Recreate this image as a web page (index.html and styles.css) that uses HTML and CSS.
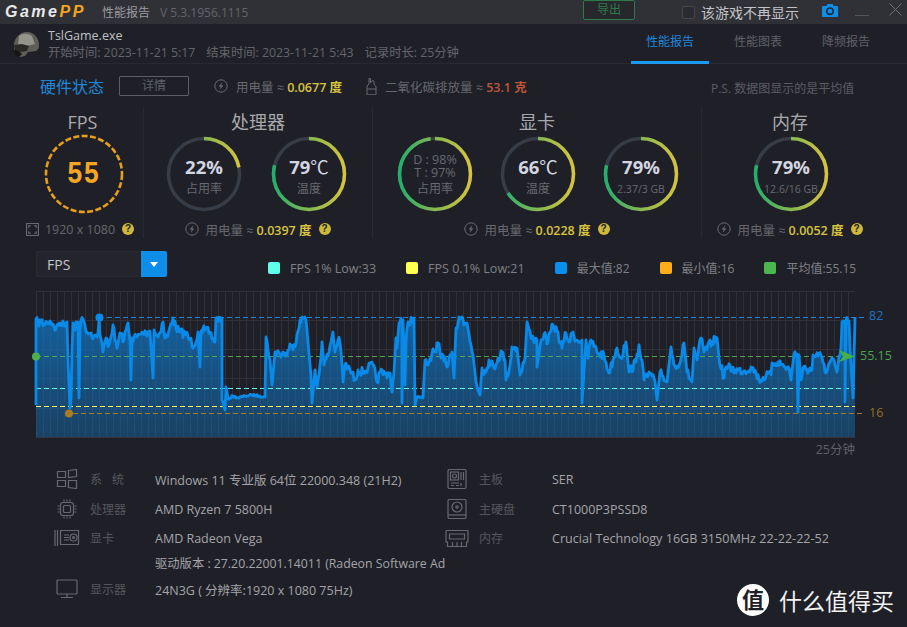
FILE: index.html
```html
<!DOCTYPE html>
<html lang="zh-CN">
<head>
  <meta charset="UTF-8" />
  <title>GamePP 性能报告</title>
  <link rel="stylesheet" href="styles.css">
</head>
<body>

<!-- iconos repetidos -->
<svg class="defs" width="0" height="0">
  <defs>
    <linearGradient id="ringGrad" x1="0" y1="0" x2="0" y2="1">
      <stop offset="0" stop-color="#22b06c"/>
      <stop offset="0.5" stop-color="#86b94f"/>
      <stop offset="1" stop-color="#d6c33c"/>
    </linearGradient>
    <linearGradient id="areaGrad" x1="0" y1="0" x2="0" y2="1">
      <stop offset="0" stop-color="#0f7acc" stop-opacity="0.72"/>
      <stop offset="1" stop-color="#1466a8" stop-opacity="0.48"/>
    </linearGradient>
    <pattern id="gridV" x="36" y="0" width="7" height="10" patternUnits="userSpaceOnUse">
      <line x1="0.5" y1="0" x2="0.5" y2="10" stroke="#2f3037"/>
    </pattern>
    <symbol id="bolt" viewBox="0 0 14 14">
      <circle cx="7" cy="7" r="6.2" fill="none" stroke="#6a6b72" stroke-width="1"/>
      <path d="M8.4 3.2 4.6 7.6h2.2l-1.2 3.2 3.8-4.4H7.2z" fill="#6a6b72"/>
    </symbol>
  </defs>
</svg>

<header class="titlebar">
  <span class="logo">Game<b>PP</b></span>
  <span class="title">性能报告</span>
  <span class="version">V 5.3.1956.1115</span>
  <span class="export">导出</span>
  <span class="checkbox"></span>
  <span class="hide-game">该游戏不再显示</span>
  <svg class="camera" width="16" height="13" viewBox="0 0 16 13">
    <path d="M1 2h3.4l1-2h5.2l1 2H15a1 1 0 0 1 1 1v9a1 1 0 0 1-1 1H1a1 1 0 0 1-1-1V3a1 1 0 0 1 1-1z" fill="#0e8ee9"/>
    <circle cx="8" cy="7.2" r="3.2" fill="none" stroke="#1f2c3a" stroke-width="1.6"/>
  </svg>
  <span class="minimize"></span>
  <svg class="close" width="13" height="13" viewBox="0 0 13 13">
    <path d="M.5.5l12 12M12.5.5l-12 12" stroke="#6e6f75" stroke-width="1" fill="none"/>
  </svg>
</header>

<section class="subhead">
  <svg class="helmet" width="29" height="27" viewBox="0 0 29 27">
    <path d="M3 17C2 8 8 1 16 1c7 0 12 6 12 13 0 3-1 5-3 6l-8 1-3 4-5 1-5-3z" fill="#5f5e59"/>
    <path d="M8 5c3-3 9-3 13 0l3 8-8 2-9-1z" fill="#94948c"/>
    <path d="M3 14l8-1 7 2-2 5-5 1-7-1z" fill="#2c2a27"/>
    <path d="M2 19l6 1 3 3-3 3-4-2z" fill="#171614"/>
  </svg>
  <div class="game-info">
    <div class="game-name">TslGame.exe</div>
    <div class="game-times">
      <span>开始时间: 2023-11-21 5:17</span>
      <span>结束时间: 2023-11-21 5:43</span>
      <span>记录时长: 25分钟</span>
    </div>
  </div>
  <nav class="tabs">
    <a class="tab active">性能报告</a>
    <a class="tab">性能图表</a>
    <a class="tab">降频报告</a>
  </nav>
</section>

<section class="status">
  <h2 class="status-title">硬件状态</h2>
  <span class="detail-btn">详情</span>
  <svg class="bolt-icon first" width="14" height="14"><use href="#bolt"/></svg>
  <span class="power">用电量 ≈ <b class="yellow">0.0677 度</b></span>
  <svg class="bottle" width="11" height="17" viewBox="0 0 11 17">
    <path d="M3 .5h1.5v4L7 2.500l1 .8v3l2 2.500v8H1V8l2-2z" fill="none" stroke="#6a6b72"/>
    <path d="M1 11h9" stroke="#6a6b72"/>
  </svg>
  <span class="power co2">二氧化碳排放量 ≈ <b class="red">53.1 克</b></span>
  <span class="note">P.S. 数据图显示的是平均值</span>
</section>

<section class="hardware">
  <div class="hw-col hw-fps">
    <h3>FPS</h3>
    <div class="rings">
      <div class="ring">
        <svg width="80" height="80" viewBox="0 0 80 80">
          <circle cx="40" cy="40" r="38" fill="none" stroke="#e89f17" stroke-width="2.6" stroke-dasharray="6 2.4"/>
        </svg>
        <span class="fps-value">55</span>
      </div>
    </div>
    <div class="hw-foot">
      <svg width="13" height="13" viewBox="0 0 12 12">
        <path d="M.5.5h11v11H.5z" fill="none" stroke="#6a6b72"/>
        <path d="M2.500 4.500v-2h2M7.500 2.500h2v2M9.500 7.500v2h-2M4.500 9.500h-2v-2" fill="none" stroke="#6a6b72"/>
      </svg>
      <span>1920 x 1080</span>
      <i class="help">?</i>
    </div>
  </div>

  <div class="hw-col hw-cpu">
    <h3>处理器</h3>
    <div class="rings">
      <div class="ring">
        <svg width="80" height="80" viewBox="0 0 80 80">
          <circle class="track" cx="40" cy="40" r="35.500"/>
          <circle class="arc" cx="40" cy="40" r="35.500" pathLength="100" stroke-dasharray="22 100"/>
        </svg>
        <div class="ring-text"><strong>22%</strong><small>占用率</small></div>
      </div>
      <div class="ring">
        <svg width="80" height="80" viewBox="0 0 80 80">
          <circle class="track" cx="40" cy="40" r="35.500"/>
          <circle class="arc" cx="40" cy="40" r="35.500" pathLength="100" stroke-dasharray="79 100"/>
        </svg>
        <div class="ring-text"><strong>79<em>℃</em></strong><small>温度</small></div>
      </div>
    </div>
    <div class="hw-foot">
      <svg width="14" height="14"><use href="#bolt"/></svg>
      <span>用电量 ≈ <b class="yellow">0.0397 度</b></span>
      <i class="help">?</i>
    </div>
  </div>

  <div class="hw-col">
    <h3>显卡</h3>
    <div class="rings">
      <div class="ring">
        <svg width="80" height="80" viewBox="0 0 80 80">
          <circle class="track" cx="40" cy="40" r="35.500"/>
          <circle class="arc" cx="40" cy="40" r="35.500" pathLength="100" stroke-dasharray="98 100"/>
        </svg>
        <div class="ring-text gpu-use"><p>D : 98%<br>T : 97%</p><small>占用率</small></div>
      </div>
      <div class="ring">
        <svg width="80" height="80" viewBox="0 0 80 80">
          <circle class="track" cx="40" cy="40" r="35.500"/>
          <circle class="arc" cx="40" cy="40" r="35.500" pathLength="100" stroke-dasharray="66 100"/>
        </svg>
        <div class="ring-text"><strong>66<em>℃</em></strong><small>温度</small></div>
      </div>
      <div class="ring">
        <svg width="80" height="80" viewBox="0 0 80 80">
          <circle class="track" cx="40" cy="40" r="35.500"/>
          <circle class="arc" cx="40" cy="40" r="35.500" pathLength="100" stroke-dasharray="79 100"/>
        </svg>
        <div class="ring-text"><strong>79%</strong><small class="mem">2.37/3 GB</small></div>
      </div>
    </div>
    <div class="hw-foot">
      <svg width="14" height="14"><use href="#bolt"/></svg>
      <span>用电量 ≈ <b class="yellow">0.0228 度</b></span>
      <i class="help">?</i>
    </div>
  </div>

  <div class="hw-col last">
    <h3>内存</h3>
    <div class="rings">
      <div class="ring">
        <svg width="80" height="80" viewBox="0 0 80 80">
          <circle class="track" cx="40" cy="40" r="35.500"/>
          <circle class="arc" cx="40" cy="40" r="35.500" pathLength="100" stroke-dasharray="79 100"/>
        </svg>
        <div class="ring-text"><strong>79%</strong><small class="mem">12.6/16 GB</small></div>
      </div>
    </div>
    <div class="hw-foot">
      <svg width="14" height="14"><use href="#bolt"/></svg>
      <span>用电量 ≈ <b class="yellow">0.0052 度</b></span>
      <i class="help">?</i>
    </div>
  </div>
</section>

<section class="chart-head">
  <div class="select">
    <span class="select-value">FPS</span>
    <span class="select-btn"></span>
  </div>
  <ul class="legend">
    <li><i class="sw cyan"></i>FPS 1% Low:33</li>
    <li><i class="sw lemon"></i>FPS 0.1% Low:21</li>
    <li class="cjk"><i class="sw blue"></i>最大值:82</li>
    <li class="cjk"><i class="sw orange"></i>最小值:16</li>
    <li class="cjk"><i class="sw green"></i>平均值:55.15</li>
  </ul>
</section>

<svg class="chart" width="907" height="175" viewBox="0 285 907 175">
  <rect x="36" y="291" width="819" height="146" fill="url(#gridV)"/>
  <path d="M36 291.500H855M36 320.500H855M36 349.500H855M36 378.500H855M36 408.500H855" stroke="#2f3037" fill="none"/>

  <polygon id="fps-area" fill="url(#areaGrad)" points=""/>

  <g fill="none" stroke-dasharray="5 3" stroke-width="1">
    <path d="M107 317.500H865" stroke="#1f86d8"/>
    <path d="M36 356.500H855" stroke="#4fa550"/>
    <path d="M36 388.500H855" stroke="#5dffe9"/>
    <path d="M36 406.500H855" stroke="#fdfd60"/>
    <path d="M73 413.500H865" stroke="#a67c25"/>
  </g>

  <polyline id="fps-line" fill="none" stroke="#0a8ae8" stroke-width="2.8" stroke-linejoin="round" points=""/>

  <path d="M36 437.500H855" stroke="#35363d" fill="none"/>
  <path d="M99.500 320v10" stroke="#0a8ae8" stroke-width="2" fill="none"/>
  <circle cx="99.500" cy="317.500" r="4" fill="#0a8ae8"/>
  <circle cx="36" cy="356.500" r="4" fill="#4cb04f"/>
  <circle cx="69" cy="413.500" r="4" fill="#a67c25"/>
  <polygon points="839,350 855,356.500 839,362 843,356.500" fill="#43b04a"/>

  <text class="axis ax-max" x="869" y="320">82</text>
  <text class="axis ax-avg" x="860" y="360">55.15</text>
  <text class="axis ax-min" x="869" y="417">16</text>
  <text class="axis ax-time" x="855" y="454" text-anchor="end">25分钟</text>
</svg>

<section class="specs">
  <div class="spec-col left">
    <div class="spec">
      <svg class="spec-icon" width="22" height="20" viewBox="0 0 22 20">
        <path d="M1.500 2.500h8v6h-8zM1.500 11.500h8v6h-8zM12.500 1.500l8-1v7l-8 1zM12.500 11.500l8 0v8l-8-1z"/>
      </svg>
      <span class="spec-label wide">系统</span>
      <span class="spec-value">Windows 11 专业版 64位 22000.348 (21H2)</span>
    </div>
    <div class="spec">
      <svg class="spec-icon" width="22" height="20" viewBox="0 0 22 20">
        <rect x="4.500" y="3.500" width="13" height="13" rx="2.500"/>
        <rect x="7.500" y="6.500" width="7" height="7" rx="1"/>
        <path d="M8 .5v2M11 .5v2M14 .5v2M8 17.500v2M11 17.500v2M14 17.500v2M1.500 7h2M1.500 10h2M1.500 13h2M18.500 7h2M18.500 10h2M18.500 13h2"/>
      </svg>
      <span class="spec-label">处理器</span>
      <span class="spec-value">AMD Ryzen 7 5800H</span>
    </div>
    <div class="spec short">
      <svg class="spec-icon gpu" width="26" height="18" viewBox="0 0 26 18">
        <path d="M1 1v16M3.500 1v16M6.500 1.500h18v14h-18z"/>
        <path d="M10 6h5M10 8.500h5M10 11h5"/>
        <circle cx="19.500" cy="8.500" r="3.500"/>
        <circle cx="19.500" cy="8.500" r="1"/>
      </svg>
      <span class="spec-label">显卡</span>
      <span class="spec-value">AMD Radeon Vega</span>
    </div>
    <div class="spec driver">
      <span class="spec-value">驱动版本 : 27.20.22001.14011 (Radeon Software Ad</span>
    </div>
    <div class="spec">
      <svg class="spec-icon" width="22" height="20" viewBox="0 0 22 20">
        <rect x="1" y="1" width="20" height="14" rx="1"/>
        <path d="M11 15v3M5 18.500h12"/>
      </svg>
      <span class="spec-label">显示器</span>
      <span class="spec-value">24N3G ( 分辨率:1920 x 1080 75Hz)</span>
    </div>
  </div>

  <div class="spec-col right">
    <div class="spec">
      <svg class="spec-icon" width="20" height="20" viewBox="0 0 20 20">
        <rect x="1" y="0.500" width="18" height="19" rx="1.500"/>
        <rect x="3.500" y="3" width="8" height="8"/>
        <circle cx="7.500" cy="7" r="2"/>
        <path d="M14 3v8M16.500 3v8M4 14h8M4 16.500h3M9 16.500h3M14 14v3"/>
      </svg>
      <span class="spec-label">主板</span>
      <span class="spec-value">SER</span>
    </div>
    <div class="spec">
      <svg class="spec-icon" width="20" height="20" viewBox="0 0 20 20">
        <rect x="1" y="0.500" width="18" height="19" rx="1.500"/>
        <circle cx="10" cy="8" r="5"/>
        <circle cx="10" cy="8" r="1.200"/>
        <path d="M1 16h18"/>
      </svg>
      <span class="spec-label">主硬盘</span>
      <span class="spec-value">CT1000P3PSSD8</span>
    </div>
    <div class="spec short">
      <svg class="spec-icon ram" width="24" height="17" viewBox="0 0 24 17">
        <path d="M2 .5h20a1 1 0 0 1 1 1v10.500h-1.500v4.500H2.500V12H1V1.500a1 1 0 0 1 1-1z"/>
        <path d="M4.500 4h15v5h-15zM7.500 16v-4M12 16v-4M16.500 16v-4"/>
      </svg>
      <span class="spec-label">内存</span>
      <span class="spec-value crucial">Crucial Technology 16GB 3150MHz 22-22-22-52</span>
    </div>
  </div>
</section>

<div class="watermark">
  <span class="wm-badge">值</span>
  <span class="wm-text">什么值得买</span>
</div>

<script src="chart.js"></script>
</body>
</html>
```

FILE: styles.css
```css
* {
  box-sizing: border-box;
}

body {
  margin: 0;
  width: 907px;
  height: 627px;
  overflow: hidden;
  position: relative;
  background: #1f2027;
  color: #a8a8ad;
  font-family: "Open Sans", "Noto Sans CJK SC", sans-serif;
  font-size: 12.5px;
}

.defs {
  display: block;
  height: 0;
}

/* Barra de titulo */
.titlebar {
  height: 24px;
  background: #303137;
  display: flex;
  align-items: center;
  position: relative;
}

.logo {
  margin-left: 5px;
  width: 97px;
  font: italic bold 16px "Liberation Sans", sans-serif;
  letter-spacing: 2.5px;
  color: #e8e8e8;
}

.logo b {
  color: #f3a51e;
}

.title {
  color: #9a9aa0;
  width: 58px;
  font-size: 12px;
}

.version {
  color: #63646b;
  width: 423px;
  font-size: 12px;
}

.export {
  width: 52px;
  height: 20px;
  margin-top: -4px;
  border: 1px solid #2f7a4c;
  border-radius: 2px;
  background: #26282c;
  color: #2f7a4c;
  font-size: 12px;
  text-align: center;
  line-height: 17px;
}

.checkbox {
  width: 13px;
  height: 13px;
  margin-left: 47px;
  border: 1px solid #45464c;
  border-radius: 2px;
  background: #2a2b30;
}

.hide-game {
  margin-left: 6px;
  width: 121px;
  font-size: 14px;
  color: #c4c4c8;
  white-space: nowrap;
}

.camera {
  margin-top: -4px;
}

.minimize {
  width: 14px;
  height: 1px;
  margin: 6px 0 0 17px;
  background: #55565c;
}

.close {
  margin-left: 20px;
  margin-top: -6px;
}

/* Cabecera del juego */
.subhead {
  height: 40px;
  display: flex;
  border-bottom: 1px solid #292a30;
  padding-left: 11px;
}

.helmet {
  margin-top: 7px;
}

.game-info {
  margin-left: 8px;
  padding-top: 3px;
  width: 583px;
}

.game-name {
  color: #bfc0c4;
  line-height: 18px;
}

.game-times {
  display: flex;
  gap: 11px;
  font-size: 12.3px;
  color: #64656c;
  line-height: 15px;
}

.tabs {
  display: flex;
}

.tab {
  width: 78px;
  margin-right: 10px;
  text-align: center;
  line-height: 36px;
  font-size: 12px;
  color: #5f6067;
}

.tab.active {
  color: #1d87dc;
  height: 40px;
  border-bottom: 3px solid #1a9af0;
}

/* Estado */
.status {
  height: 44px;
  display: flex;
  align-items: center;
  padding-left: 40px;
}

.status-title {
  margin: 0;
  width: 79px;
  font-size: 16px;
  font-weight: 400;
  color: #1f86d8;
}

.detail-btn {
  width: 70px;
  height: 20px;
  border: 1px solid #5d5e64;
  border-radius: 1px;
  color: #5f6067;
  font-size: 12px;
  text-align: center;
  line-height: 18px;
}

.bolt-icon.first {
  margin-left: 25px;
}

.power {
  margin-left: 8px;
  color: #66676e;
  width: 122px;
  white-space: nowrap;
}

b.yellow {
  color: #d8c33f;
  font-weight: 600;
}

b.red {
  color: #bd5637;
  font-weight: 600;
}

.bottle {
  margin-left: 8px;
}

.co2 {
  width: 326px;
}

.note {
  color: #5b5c63;
  font-size: 12px;
  white-space: nowrap;
  margin-top: 4px;
}

/* Columnas de hardware */
.hardware {
  display: grid;
  grid-template-columns: 122px 229px 329px 176px;
  margin-left: 22px;
  height: 130px;
}

.hw-col {
  border-right: 1px solid #292a30;
  display: flex;
  flex-direction: column;
  align-items: center;
}

.hw-col.last {
  border-right: none;
}

.hw-col h3 {
  margin: 0;
  height: 26px;
  font-size: 18px;
  line-height: 28px;
  font-weight: 400;
  color: #a9a9ad;
}

.rings {
  display: flex;
  gap: 25px;
  height: 80px;
}

.hw-cpu .rings {
  gap: 27px;
  margin-left: -5px;
}

.ring {
  display: grid;
  place-items: center;
  width: 78px;
  height: 80px;
}

.ring svg,
.ring > span,
.ring-text {
  grid-area: 1 / 1;
}

.track,
.arc {
  fill: none;
  stroke-width: 3.5;
}

.track {
  stroke: #373c47;
}

.arc {
  stroke: url(#ringGrad);
  transform: rotate(-90deg);
  transform-origin: 40px 40px;
}

.fps-value {
  font: bold 31px "Liberation Mono", monospace;
  letter-spacing: 1px;
  color: #f5a623;
  transform: scaleX(0.85);
}

.ring-text {
  display: flex;
  flex-direction: column;
  align-items: center;
  line-height: 1;
}

.ring-text strong {
  font-size: 18.5px;
  font-weight: 700;
  color: #d3d6e0;
  line-height: 26px;
}

.ring-text em {
  font-style: normal;
  font-weight: 400;
}

.ring-text small {
  font-size: 12px;
  color: #686971;
  margin-top: 3px;
}

.ring-text small.mem {
  font-size: 10.5px;
  margin-top: 4px;
}

.gpu-use p {
  margin: 0;
  text-align: center;
  color: #686971;
  font-size: 12.5px;
  line-height: 13px;
}

.gpu-use small {
  margin-top: 4px;
}

.hw-foot {
  margin-top: 6px;
  display: flex;
  align-items: center;
  gap: 6px;
  height: 18px;
  color: #66676e;
}

.hw-fps .hw-foot {
  margin-right: 5px;
}

.help {
  width: 12px;
  height: 12px;
  margin-left: 1px;
  border-radius: 50%;
  background: #cdb83a;
  color: #1f2027;
  font: bold 10px/12px "Liberation Sans", sans-serif;
  text-align: center;
}

/* Cabecera del grafico */
.chart-head {
  margin-top: 13px;
  height: 26px;
  display: flex;
  padding-left: 36px;
}

.select {
  width: 131px;
  display: flex;
  background: #24252c;
  border: 1px solid #292a31;
}

.select-value {
  flex-grow: 1;
  font-size: 14px;
  line-height: 25px;
  padding-left: 10px;
  color: #c6c6ca;
}

.select-btn {
  width: 26px;
  margin: -1px;
  background: #0e8ee9;
  border-radius: 0 2px 2px 0;
  display: grid;
  place-items: center;
}

.select-btn::after {
  content: "";
  border: 4px solid transparent;
  border-top: 5px solid #fff;
  border-bottom: 0;
}

.legend {
  list-style: none;
  margin: 4px 0 0 101px;
  padding: 0;
  height: 26px;
  display: flex;
  color: #7f8086;
}

.legend li {
  display: flex;
  align-items: center;
  gap: 10px;
  margin-right: 30px;
  white-space: nowrap;
}

.legend li.cjk {
  font-size: 12px;
}

.sw {
  width: 12px;
  height: 12px;
  border-radius: 2px;
}

.sw.cyan { background: #5dffe9; }
.sw.lemon { background: #ffff50; }
.sw.blue { background: #0a8ef0; }
.sw.orange { background: #ffae1a; }
.sw.green { background: #4bb54f; }

/* Grafico */
.chart {
  display: block;
  margin-top: 8px;
}

.axis {
  font-size: 12.5px;
  font-family: "Open Sans", "Noto Sans CJK SC", sans-serif;
}

.ax-max { fill: #1b74c0; }
.ax-avg { fill: #4aa34e; }
.ax-min { fill: #93702a; }
.ax-time { fill: #5f6067; }

/* Especificaciones */
.specs {
  margin-top: 4px;
  display: flex;
}

.spec-col.left {
  margin-left: 56px;
  width: 391px;
}

.spec {
  height: 30px;
  display: flex;
  align-items: center;
  width: 100%;
  white-space: nowrap;
}

.spec.short {
  height: 28px;
}

.spec.driver {
  padding-left: 99px;
  height: 22px;
  font-size: 12.3px;
}

.spec-icon {
  flex: none;
  fill: none;
  stroke: #68696f;
  stroke-width: 1.2;
}

.spec-icon.gpu,
.spec-icon.ram {
  margin-left: -2px;
  margin-right: -2px;
}

.spec-label {
  flex: none;
  width: 65px;
  margin-left: 12px;
  font-size: 12px;
  color: #55565d;
  white-space: pre;
}

.spec-col.right .spec-label {
  width: 73px;
}

.spec-label.wide {
  letter-spacing: 10px;
}

.spec-value {
  color: #a4a4a9;
}

.spec-value.crucial {
  font-size: 12.6px;
}

/* Marca de agua */
.watermark {
  position: absolute;
  left: 737px;
  top: 583px;
  display: flex;
  align-items: center;
  gap: 10px;
}

.wm-badge {
  width: 32px;
  height: 32px;
  border-radius: 50%;
  background: #fff;
  color: #1f2027;
  font-size: 22px;
  font-weight: 700;
  line-height: 31px;
  text-align: center;
}

.wm-text {
  font-size: 23px;
  color: #f2f2f2;
}
```

FILE: chart.js
```js
// Curva de FPS: puntos de control [x, y] en coordenadas del grafico
const puntos = [
  [36,405],[36,319],[38,323],[41,321],[44,325],[47,322],[50,321],[53,324],[56,329],[58,325],[61,323],[64,326],[67,322],
  [68,360],[69,385],[70,408],[71,400],[72,350],[73,323],[75,330],[76,322],[78,322],[79,398],[80,330],[81,320],[83,319],
  [85,325],[87,332],[91,333],[94,336],[97,337],[99,322],[100,335],[103,352],[106,338],[109,345],[113,325],[115,340],
  [117,348],[120,333],[124,340],[128,323],[130,340],[131,380],[132,338],[137,337],[141,334],[146,333],[150,331],
  [153,378],[154,330],[158,337],[163,322],[165,338],[168,335],[173,318],[176,328],[180,332],[186,334],[190,340],
  [194,346],[198,332],[200,367],[201,331],[205,330],[210,333],[215,342],[216,318],[222,318],[222,400],[225,410],
  [226,387],[228,399],[233,396],[238,398],[245,396],[252,395],[260,396],[265,397],[266,337],[268,350],[270,360],
  [272,385],[275,352],[280,354],[285,353],[287,355],[290,344],[293,350],[297,335],[300,320],[302,317],[305,317],
  [307,330],[308,343],[311,375],[312,403],[315,370],[317,387],[320,365],[322,342],[324,365],[328,355],[333,332],
  [335,352],[338,340],[340,343],[342,365],[343,382],[345,365],[350,370],[355,380],[358,370],[363,372],[368,368],
  [373,365],[377,382],[380,372],[385,374],[390,373],[392,392],[394,372],[396,338],[397,348],[399,323],[402,322],
  [402,403],[403,320],[405,385],[406,340],[408,322],[412,320],[414,318],[415,405],[417,397],[423,398],[425,360],
  [428,365],[432,353],[436,352],[438,343],[441,358],[445,357],[447,367],[450,355],[452,352],[454,378],[456,328],
  [459,317],[462,317],[464,325],[467,323],[471,345],[473,355],[476,382],[480,395],[482,368],[486,372],[489,360],
  [494,368],[498,358],[502,352],[505,360],[506,380],[510,365],[512,347],[517,348],[520,375],[525,358],[527,322],
  [531,338],[537,340],[537,367],[541,340],[544,334],[548,342],[553,325],[557,331],[562,348],[566,333],[569,342],
  [573,332],[576,340],[582,340],[582,403],[586,340],[588,358],[591,340],[597,352],[604,356],[609,373],[613,360],
  [617,348],[621,358],[626,342],[629,372],[636,362],[639,345],[642,360],[644,380],[650,374],[654,378],[657,400],
  [660,372],[667,382],[671,347],[674,365],[680,363],[684,343],[687,372],[692,382],[694,348],[697,360],[701,338],
  [704,352],[712,342],[717,338],[719,358],[724,378],[726,367],[735,370],[745,371],[751,367],[756,373],[759,380],
  [766,376],[771,375],[772,363],[778,362],[785,367],[789,368],[791,380],[794,354],[797,354],[798,412],[799,355],
  [801,380],[803,368],[812,370],[813,355],[818,356],[821,356],[824,364],[826,373],[831,360],[835,365],[837,372],
  [841,348],[842,322],[845,321],[845,402],[846,321],[849,321],[850,348],[853,398],[855,318]
];

// Ruido fijo para que la curva salga igual en cada carga
let semilla = 7;
function ruido() {
  semilla = (semilla * 16807) % 2147483647;
  return semilla / 2147483647 - 0.5;
}

function densificar(lista) {
  const salida = [];
  lista.forEach((p, i) => {
    if (i > 0) {
      const [x0, y0] = lista[i - 1];
      const dx = p[0] - x0;
      const dy = Math.abs(p[1] - y0);
      const pasos = Math.round(dx);
      // en las caidas bruscas no se mete ruido
      if (dy < 25) {
        for (let k = 1; k < pasos; k++) {
          const y = y0 + (p[1] - y0) * k / pasos;
          const amp = y > 390 ? 2 : 9;
          const ny = Math.max(317.5, y + ruido() * amp);
          salida.push((x0 + dx * k / pasos).toFixed(1) + ',' + ny.toFixed(1));
        }
      }
    }
    salida.push(p[0] + ',' + p[1]);
  });
  return salida;
}

const curva = densificar(puntos);
document.getElementById('fps-line').setAttribute('points', curva.join(' '));
document.getElementById('fps-area').setAttribute('points', ['36,437'].concat(curva.slice(1), ['855,437']).join(' '));
```
